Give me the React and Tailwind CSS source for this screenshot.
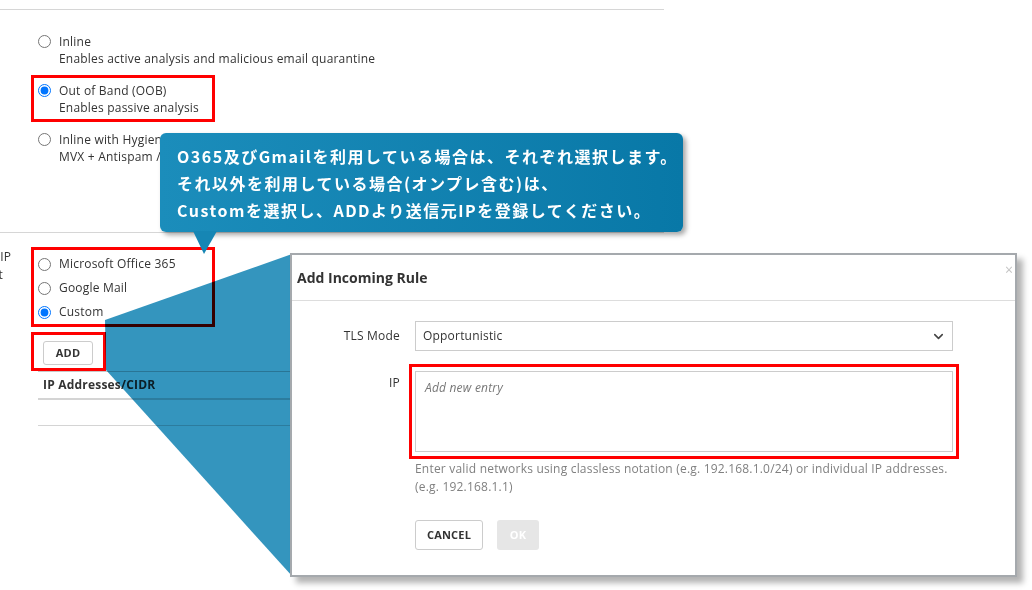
import { ChevronDown } from "lucide-react";

const Radio = ({ checked }) => (
  <input
    type="radio"
    checked={checked}
    readOnly
    className="m-0 h-[13px] w-[13px] shrink-0"
  />
);

const ModeOption = ({ title, desc, checked }) => (
  <div className="flex gap-[8px]">
    <div className="pt-[2px]">
      <Radio checked={checked} />
    </div>
    <div className="leading-[17px]">
      <div>{title}</div>
      <div>{desc}</div>
    </div>
  </div>
);

const ProviderOption = ({ label, checked }) => (
  <div className="flex h-[24px] items-center gap-[8px]">
    <Radio checked={checked} />
    <span>{label}</span>
  </div>
);

const Callout = () => (
  <div className="absolute left-[160px] top-[133px]">
    <div className="h-[99px] w-[523px] rounded-[6px] bg-gradient-to-r from-[#1b8dbb] to-[#0878a7] pl-[17px] pt-[10px] text-[16px] font-bold leading-[27px] tracking-[1.5px] text-white shadow-[3px_3px_5px_rgba(0,0,0,0.35)] [font-family:'Noto_Sans_CJK_JP',sans-serif]">
      <div>O365及びGmailを利用している場合は、それぞれ選択します。</div>
      <div>それ以外を利用している場合(オンプレ含む)は、</div>
      <div>Customを選択し、ADDより送信元IPを登録してください。</div>
    </div>
    <svg className="absolute left-[33px] top-[98px]" width="26" height="24" viewBox="0 0 26 24">
      <polygon points="0,0 24,0 11,23" fill="#1686b4" />
    </svg>
  </div>
);

const Projection = () => (
  <svg
    className="pointer-events-none absolute left-0 top-0 mix-blend-multiply"
    width="1032"
    height="590"
  >
    <polygon points="105,320 292,254 292,576 106,370" fill="#3495be" />
  </svg>
);

const Modal = () => (
  <div className="absolute left-[290px] top-[253px] h-[324px] w-[727px] border-[2px] border-[#a5a9ad] bg-white shadow-[6px_6px_6px_rgba(0,0,0,0.3)]">
    <div className="relative flex h-[46px] items-center border-b border-[#dddddd] pl-[5px] text-[14px] font-bold tracking-normal text-[#333]">
      Add Incoming Rule
      <span className="absolute right-[2px] top-[4px] text-[14px] font-normal text-[#c4c4c4]">×</span>
    </div>
    <div className="pt-[20px]">
      <div className="flex items-center">
        <div className="w-[108px] text-right">TLS Mode</div>
        <div className="ml-[15px] flex h-[30px] w-[538px] items-center justify-between border border-[#cccccc] pl-[7px] pr-[6px]">
          <span>Opportunistic</span>
          <ChevronDown size={15} strokeWidth={2.5} color="#444" />
        </div>
      </div>
      <div className="mt-[20px] flex">
        <div className="w-[108px] pt-[3px] text-right">IP</div>
        <div className="ml-[15px] w-[538px]">
          <div className="h-[81px] border border-[#cccccc] px-[9px] pt-[7px] italic text-[#777]">
            Add new entry
          </div>
          <div className="mt-[8px] leading-[18px] text-[#808080]">
            Enter valid networks using classless notation (e.g. 192.168.1.0/24) or individual IP addresses.
            <br />
            (e.g. 192.168.1.1)
          </div>
          <div className="mt-[24px] flex gap-[14px]">
            <div className="flex h-[30px] w-[68px] items-center justify-center rounded-[3px] border border-[#cccccc] text-[11px] font-bold text-[#333]">
              CANCEL
            </div>
            <div className="flex h-[30px] w-[42px] items-center justify-center rounded-[3px] bg-[#e6e6e6] text-[11px] font-bold text-white">
              OK
            </div>
          </div>
        </div>
      </div>
    </div>
  </div>
);

export default function App() {
  return (
    <div className="relative h-[590px] w-[1032px] overflow-hidden bg-white text-[12px] tracking-[0.2px] text-[#333] [font-family:'Open_Sans',sans-serif]">
      <div className="mt-[9px] h-px w-[664px] bg-[#d6d6d6]" />

      <div className="flex flex-col gap-[15px] pl-[38px] pt-[23px]">
        <ModeOption title="Inline" desc="Enables active analysis and malicious email quarantine" />
        <ModeOption title="Out of Band (OOB)" desc="Enables passive analysis" checked />
        <ModeOption title="Inline with Hygiene" desc="MVX + Antispam / Antivirus" />
      </div>

      <div className="mt-[67px] h-px w-[664px] bg-[#d6d6d6]" />

      <div className="flex pt-[19px]">
        <div className="w-[38px] shrink-0 leading-[18px]">
          <div className="mt-[-4px] ml-[-44px] whitespace-nowrap">Sender IP</div>
          <div className="ml-[-17px] whitespace-nowrap">List</div>
        </div>
        <div className="w-[626px]">
          <ProviderOption label="Microsoft Office 365" />
          <ProviderOption label="Google Mail" />
          <ProviderOption label="Custom" checked />
          <div className="ml-[5px] mt-[17px] flex h-[24px] w-[50px] items-center justify-center rounded-[3px] border border-[#cccccc] text-[11px] font-bold">
            ADD
          </div>
          <div className="mt-[6px] border-t border-[#c8c8c8]">
            <div className="flex h-[28px] items-center border-b-2 border-[#d4d4d4] pl-[5px] font-bold">
              IP Addresses/CIDR
            </div>
            <div className="h-[26px] border-b border-[#d4d4d4]" />
          </div>
        </div>
      </div>

      {/* annotation boxes */}
      <div className="absolute left-[31px] top-[75px] h-[47px] w-[184px] border-[3px] border-[#ff0000]" />
      <div className="absolute left-[31px] top-[247px] h-[80px] w-[184px] border-[3px] border-[#ff0000]" />
      <div className="absolute left-[31px] top-[332px] h-[39px] w-[75px] border-[3px] border-[#ff0000]" />

      <Projection />
      <Callout />
      <Modal />
      <div className="absolute left-[409px] top-[364px] h-[95px] w-[550px] border-[3px] border-[#ff0000]" />
    </div>
  );
}
